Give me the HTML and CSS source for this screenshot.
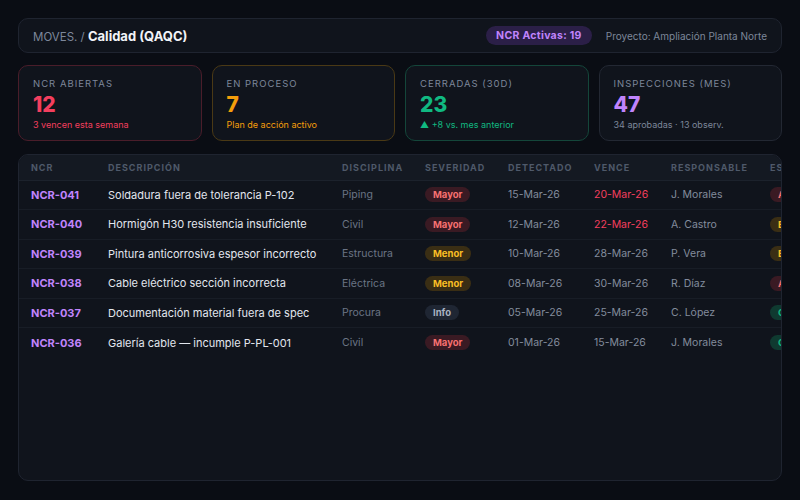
FILE: index.html
```html
<!DOCTYPE html>
<html lang="es">
<head>
  <meta charset="UTF-8" />
  <title>Calidad (QAQC)</title>
  <link rel="stylesheet" href="styles.css">
</head>
<body>
  <header class="topbar">
    <div class="crumbs"><span class="crumb-root">MOVES. /</span> <b>Calidad (QAQC)</b></div>
    <div class="topbar-right">
      <span class="pill">NCR Activas: 19</span>
      <span class="project">Proyecto: Ampliación Planta Norte</span>
    </div>
  </header>

  <section class="stats">
    <div class="stat red">
      <div class="stat-label">NCR Abiertas</div>
      <div class="stat-value">12</div>
      <div class="stat-sub">3 vencen esta semana</div>
    </div>
    <div class="stat amber">
      <div class="stat-label">En proceso</div>
      <div class="stat-value">7</div>
      <div class="stat-sub">Plan de acción activo</div>
    </div>
    <div class="stat green">
      <div class="stat-label">Cerradas (30D)</div>
      <div class="stat-value">23</div>
      <div class="stat-sub">▲ +8 vs. mes anterior</div>
    </div>
    <div class="stat purple">
      <div class="stat-label">Inspecciones (mes)</div>
      <div class="stat-value">47</div>
      <div class="stat-sub">34 aprobadas · 13 observ.</div>
    </div>
  </section>

  <section class="panel">
    <table class="ncr-table">
      <colgroup>
        <col class="c-id"><col class="c-desc"><col class="c-disc"><col class="c-sev">
        <col class="c-det"><col class="c-vence"><col class="c-resp"><col class="c-est">
      </colgroup>
      <thead>
        <tr>
          <th>NCR</th><th>Descripción</th><th>Disciplina</th><th>Severidad</th>
          <th>Detectado</th><th>Vence</th><th>Responsable</th><th>Estado</th>
        </tr>
      </thead>
      <tbody>
        <tr>
          <td class="id">NCR-041</td><td class="desc">Soldadura fuera de tolerancia P-102</td><td class="muted">Piping</td>
          <td><span class="badge mayor">Mayor</span></td><td class="date">15-Mar-26</td><td class="date late">20-Mar-26</td>
          <td class="date">J. Morales</td><td><span class="badge mayor">Abierta</span></td>
        </tr>
        <tr>
          <td class="id">NCR-040</td><td class="desc">Hormigón H30 resistencia insuficiente</td><td class="muted">Civil</td>
          <td><span class="badge mayor">Mayor</span></td><td class="date">12-Mar-26</td><td class="date late">22-Mar-26</td>
          <td class="date">A. Castro</td><td><span class="badge menor">En proceso</span></td>
        </tr>
        <tr>
          <td class="id">NCR-039</td><td class="desc">Pintura anticorrosiva espesor incorrecto</td><td class="muted">Estructura</td>
          <td><span class="badge menor">Menor</span></td><td class="date">10-Mar-26</td><td class="date">28-Mar-26</td>
          <td class="date">P. Vera</td><td><span class="badge menor">En proceso</span></td>
        </tr>
        <tr>
          <td class="id">NCR-038</td><td class="desc">Cable eléctrico sección incorrecta</td><td class="muted">Eléctrica</td>
          <td><span class="badge menor">Menor</span></td><td class="date">08-Mar-26</td><td class="date">30-Mar-26</td>
          <td class="date">R. Díaz</td><td><span class="badge mayor">Abierta</span></td>
        </tr>
        <tr>
          <td class="id">NCR-037</td><td class="desc">Documentación material fuera de spec</td><td class="muted">Procura</td>
          <td><span class="badge info">Info</span></td><td class="date">05-Mar-26</td><td class="date">25-Mar-26</td>
          <td class="date">C. López</td><td><span class="badge ok">Cerrada</span></td>
        </tr>
        <tr>
          <td class="id">NCR-036</td><td class="desc">Galería cable — incumple P-PL-001</td><td class="muted">Civil</td>
          <td><span class="badge mayor">Mayor</span></td><td class="date">01-Mar-26</td><td class="date">15-Mar-26</td>
          <td class="date">J. Morales</td><td><span class="badge ok">Cerrada</span></td>
        </tr>
      </tbody>
    </table>
  </section>
</body>
</html>
```

FILE: styles.css
```css
* {
  box-sizing: border-box;
}
html, body {
  height: 100%;
}
body {
  margin: 0;
  padding: 18px 18px 19px;
  background: #0a0d14;
  color: #e2e6ee;
  font-family: Inter, "Liberation Sans", sans-serif;
  display: flex;
  flex-direction: column;
}
.topbar {
  height: 35px;
  display: flex;
  align-items: center;
  justify-content: space-between;
  padding: 0 14px;
  background: #10141c;
  border: 1px solid #1f2430;
  border-radius: 10px;
}
.crumbs {
  font-size: 11.5px;
}
.crumb-root {
  color: #7d879a;
}
.crumbs b {
  color: #f2f4f8;
  font-size: 13px;
  font-weight: 700;
}
.topbar-right {
  display: flex;
  align-items: center;
  gap: 14px;
}
.pill {
  background: #2b1f47;
  color: #c084fc;
  font-size: 10.5px;
  font-weight: 700;
  padding: 3px 10px;
  border-radius: 10px;
  letter-spacing: 0.3px;
}
.project {
  color: #7d879a;
  font-size: 10px;
}
.stats {
  display: grid;
  grid-template-columns: repeat(4, 1fr);
  gap: 10px;
  margin-top: 12px;
}
.stat {
  height: 76px;
  padding: 12px 14px;
  background: #10141c;
  border: 1px solid #232833;
  border-radius: 10px;
}
.stat-label {
  font-size: 9.5px;
  letter-spacing: 1px;
  text-transform: uppercase;
  color: #7d879a;
}
.stat-value {
  font-size: 21px;
  font-weight: 800;
  line-height: 24px;
  margin-top: 4px;
}
.stat-sub {
  font-size: 9px;
  margin-top: 2px;
  color: #7d879a;
}
.stat.red { border-color: #4a1d2a; }
.stat.red .stat-value, .stat.red .stat-sub { color: #f43f5e; }
.stat.amber { border-color: #4a3915; }
.stat.amber .stat-value, .stat.amber .stat-sub { color: #f59e0b; }
.stat.green { border-color: #14463a; }
.stat.green .stat-value, .stat.green .stat-sub { color: #10b981; }
.stat.purple .stat-value { color: #c084fc; }
.panel {
  flex: 1;
  margin-top: 13px;
  background: #10141c;
  border: 1px solid #1f2430;
  border-radius: 10px;
  overflow: hidden;
}
.ncr-table {
  border-collapse: collapse;
  table-layout: fixed;
  width: 820px;
  white-space: nowrap;
}
.c-id { width: 77px; }
.c-desc { width: 234px; }
.c-disc { width: 83px; }
.c-sev { width: 83px; }
.c-det { width: 86px; }
.c-vence { width: 77px; }
.c-resp { width: 99px; }
.c-est { width: 81px; }
.ncr-table th {
  height: 25px;
  background: #141922;
  text-align: left;
  padding: 0 0 0 12px;
  font-size: 9px;
  font-weight: 700;
  letter-spacing: 1px;
  text-transform: uppercase;
  color: #4f596a;
  border-bottom: 1px solid #1c222c;
}
.ncr-table td {
  height: 29.5px;
  padding: 0 0 0 12px;
  font-size: 11px;
  border-bottom: 1px solid #181d26;
  overflow: hidden;
}
.ncr-table tbody tr:last-child td {
  border-bottom: none;
}
.id {
  color: #c084fc;
  font-weight: 700;
}
.desc {
  color: #e2e6ee;
}
.muted {
  color: #6b7485;
  font-size: 10.5px !important;
}
.date {
  color: #838c9d;
  font-size: 10.5px !important;
}
.date.late {
  color: #f43f5e;
}
.badge {
  display: inline-block;
  font-size: 9.5px;
  font-weight: 700;
  padding: 2px 8px;
  border-radius: 8px;
}
.badge.mayor { background: #3a1a23; color: #f87171; }
.badge.menor { background: #3a2e14; color: #fbbf24; }
.badge.info { background: #1f2633; color: #aab3c2; }
.badge.ok { background: #0f3a30; color: #10b981; }
```
